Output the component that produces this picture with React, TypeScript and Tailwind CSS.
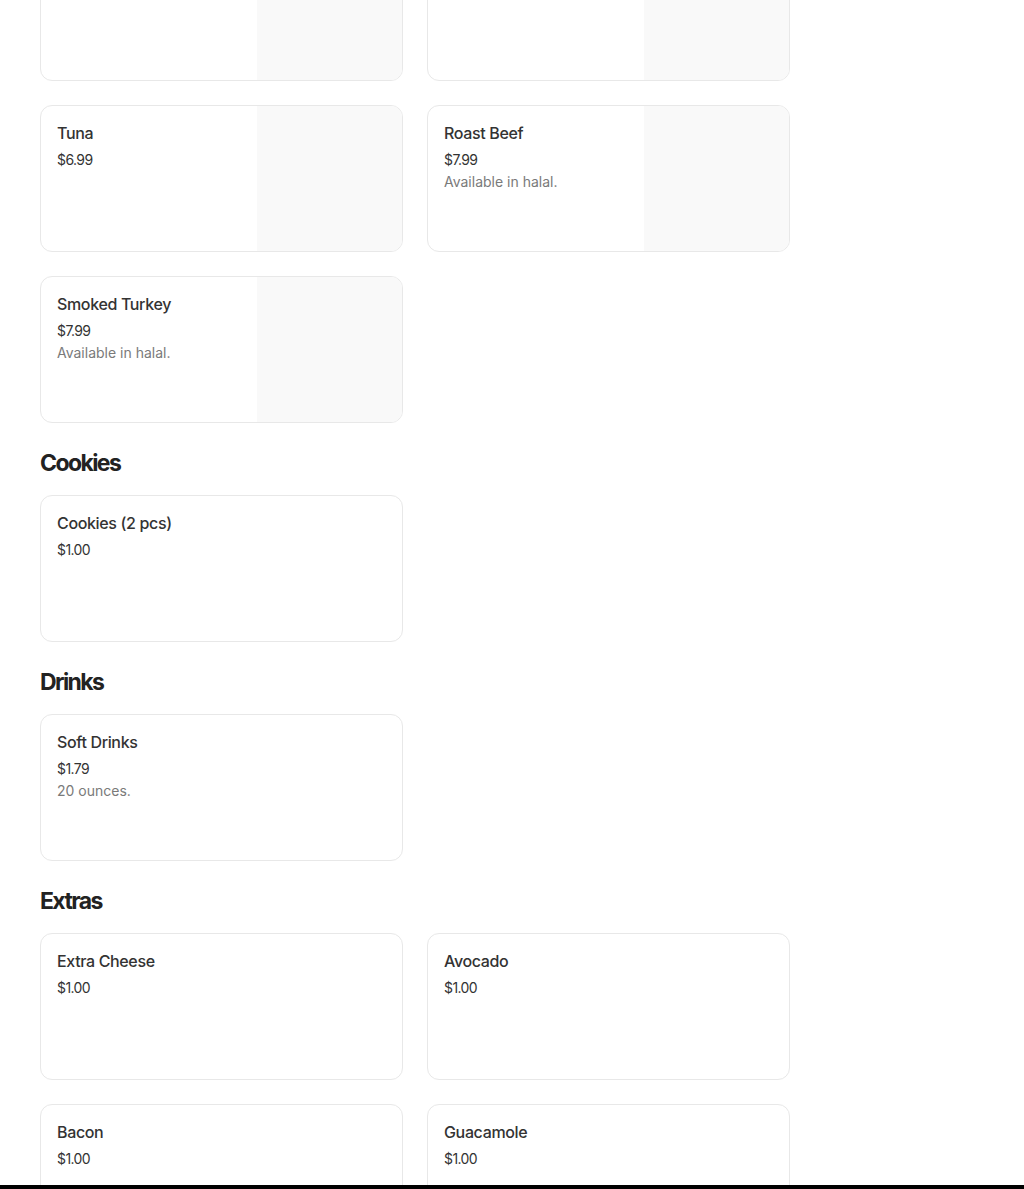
import React from 'react'

interface MenuItem {
  name: string
  price: string
  description?: string
  image?: boolean
}

interface Section {
  title?: string
  items: MenuItem[]
}

const sections: Section[] = [
  {
    items: [
      { name: '', price: '', image: true },
      { name: '', price: '', image: true },
      { name: 'Tuna', price: '$6.99', image: true },
      { name: 'Roast Beef', price: '$7.99', description: 'Available in halal.', image: true },
      { name: 'Smoked Turkey', price: '$7.99', description: 'Available in halal.', image: true },
    ],
  },
  {
    title: 'Cookies',
    items: [{ name: 'Cookies (2 pcs)', price: '$1.00' }],
  },
  {
    title: 'Drinks',
    items: [{ name: 'Soft Drinks', price: '$1.79', description: '20 ounces.' }],
  },
  {
    title: 'Extras',
    items: [
      { name: 'Extra Cheese', price: '$1.00' },
      { name: 'Avocado', price: '$1.00' },
      { name: 'Bacon', price: '$1.00' },
      { name: 'Guacamole', price: '$1.00' },
    ],
  },
]

const ItemCard: React.FC<{ item: MenuItem }> = ({ item }) => (
  <div className="flex h-[147px] overflow-hidden rounded-xl border border-[#e8e8e8] bg-white">
    <div className="flex-1 px-4 pt-[15px]">
      {item.name && (
        <div className="text-[16px] leading-6 font-medium tracking-[-0.35px] text-[#333]">
          {item.name}
        </div>
      )}
      {item.price && (
        <div className="mt-[3px] text-[14px] leading-6 tracking-[-0.6px] text-[#333]">
          {item.price}
        </div>
      )}
      {item.description && (
        <div className="text-[14px] leading-5 text-[#7a7a7a]">{item.description}</div>
      )}
    </div>
    {item.image && <div className="h-full w-[145px] shrink-0 bg-[#f9f9f9]" />}
  </div>
)

export default function App() {
  return (
    <div
      className="flex h-[1189px] flex-col overflow-hidden bg-white"
      style={{ fontFamily: 'Inter, "Noto Sans", sans-serif' }}
    >
      <div className="flex-1 overflow-hidden">
        <div className="-mt-[66px] w-[790px] pl-10">
          {sections.map((section, i) => (
            <div key={i}>
              {section.title && (
                <h2 className="mt-6 mb-4 text-[23px] leading-8 font-bold tracking-[-1.6px] text-[#222]">
                  {section.title}
                </h2>
              )}
              <div className="grid grid-cols-2 gap-6">
                {section.items.map((item, j) => (
                  <ItemCard key={j} item={item} />
                ))}
              </div>
            </div>
          ))}
        </div>
      </div>
      <div className="h-1 shrink-0 bg-black" />
    </div>
  )
}
